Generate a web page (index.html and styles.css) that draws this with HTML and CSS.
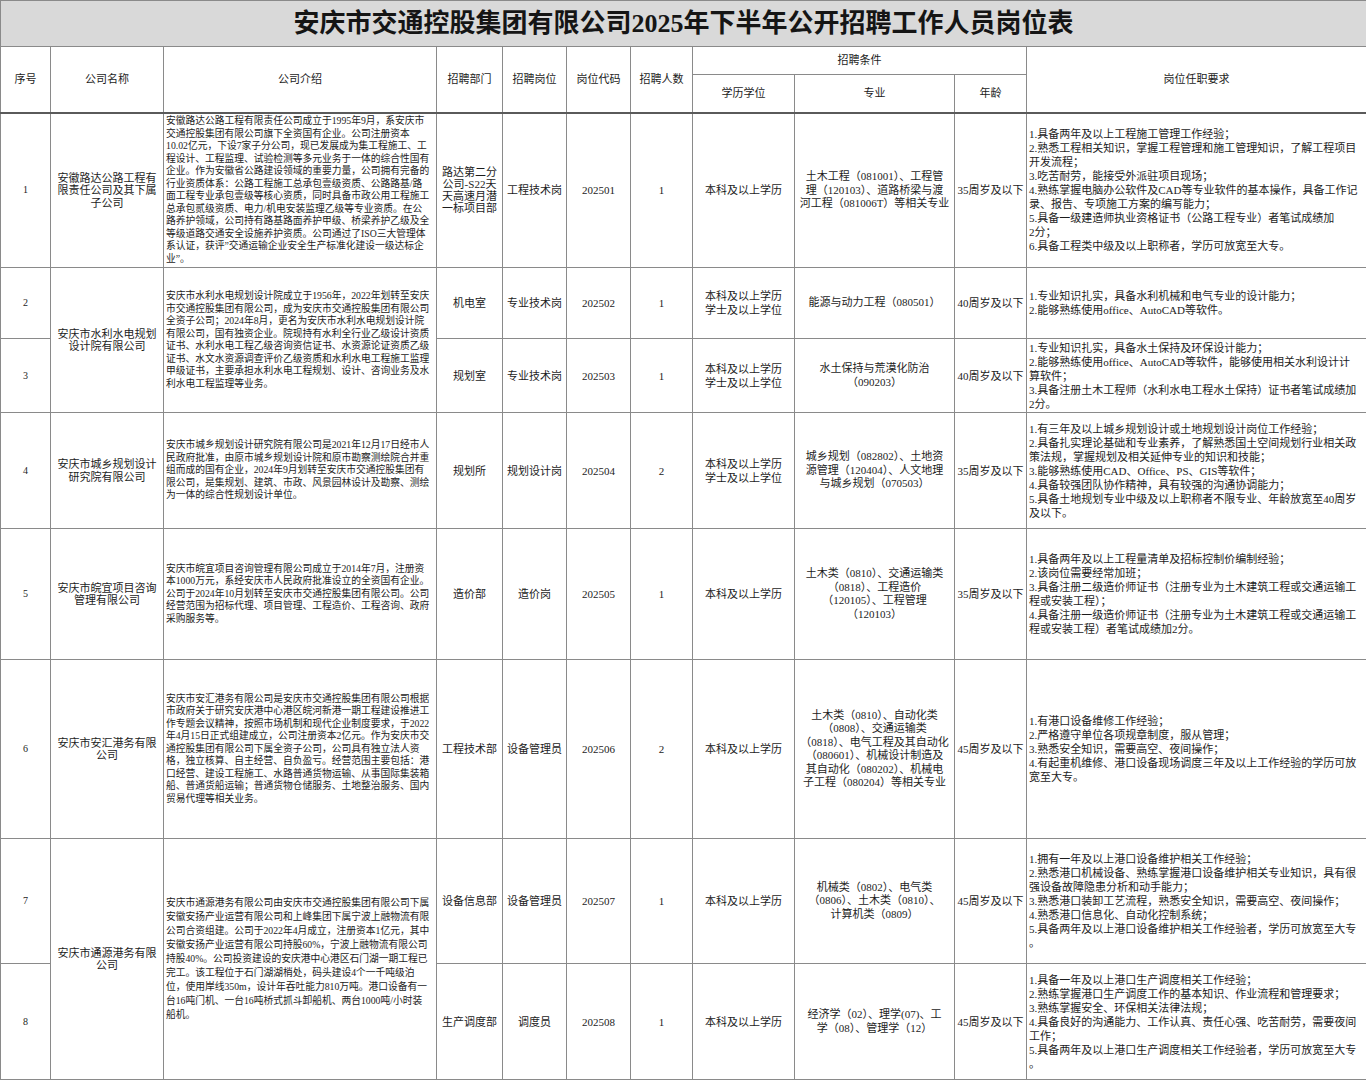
FILE: index.html
```html
<!DOCTYPE html>
<html lang="zh-CN">
<head>
<meta charset="utf-8">
<title>安庆市交通控股集团有限公司2025年下半年公开招聘工作人员岗位表</title>
<link rel="stylesheet" href="styles.css">
</head>
<body>
<table class="sheet">
  <colgroup>
    <col class="c-no"><col class="c-name"><col class="c-intro"><col class="c-dept"><col class="c-pos"><col class="c-code"><col class="c-num"><col class="c-edu"><col class="c-major"><col class="c-age"><col class="c-req">
  </colgroup>
  <thead>
    <tr class="r-title"><th colspan="11" class="title">安庆市交通控股集团有限公司2025年下半年公开招聘工作人员岗位表</th></tr>
    <tr class="r-h1">
      <th rowspan="2" class="hb">序号</th>
      <th rowspan="2" class="hb">公司名称</th>
      <th rowspan="2" class="hb">公司介绍</th>
      <th rowspan="2" class="hb">招聘部门</th>
      <th rowspan="2" class="hb">招聘岗位</th>
      <th rowspan="2" class="hb">岗位代码</th>
      <th rowspan="2" class="hb">招聘人数</th>
      <th colspan="3">招聘条件</th>
      <th rowspan="2" class="hb">岗位任职要求</th>
    </tr>
    <tr class="r-h2">
      <th class="hb">学历学位</th>
      <th class="hb">专业</th>
      <th class="hb">年龄</th>
    </tr>
  </thead>
  <tbody>
    <tr class="r1">
      <td class="no">1</td>
      <td class="name">安徽路达公路工程有<br>限责任公司及其下属<br>子公司</td>
      <td class="intro">安徽路达公路工程有限责任公司成立于1995年9月，系安庆市<br>交通控股集团有限公司旗下全资国有企业。公司注册资本<br>10.02亿元，下设7家子分公司，现已发展成为集工程施工、工<br>程设计、工程监理、试验检测等多元业务于一体的综合性国有<br>企业。作为安徽省公路建设领域的重要力量，公司拥有完备的<br>行业资质体系：公路工程施工总承包壹级资质、公路路基/路<br>面工程专业承包壹级等核心资质，同时具备市政公用工程施工<br>总承包贰级资质、电力/机电安装监理乙级等专业资质。在公<br>路养护领域，公司持有路基路面养护甲级、桥梁养护乙级及全<br>等级道路交通安全设施养护资质。公司通过了ISO三大管理体<br>系认证，获评”交通运输企业安全生产标准化建设一级达标企<br>业”。</td>
      <td class="mid tight">路达第二分<br>公司-S22天<br>天高速月潜<br>一标项目部</td>
      <td class="mid">工程技术岗</td>
      <td class="mid">202501</td>
      <td class="mid">1</td>
      <td class="mid">本科及以上学历</td>
      <td class="major">土木工程（081001）、工程管<br>理（120103）、道路桥梁与渡<br>河工程（081006T）等相关专业</td>
      <td class="mid">35周岁及以下</td>
      <td class="req">1.具备两年及以上工程施工管理工作经验；<br>2.熟悉工程相关知识，掌握工程管理和施工管理知识，了解工程项目<br>开发流程；<br>3.吃苦耐劳，能接受外派驻项目现场；<br>4.熟练掌握电脑办公软件及CAD等专业软件的基本操作，具备工作记<br>录、报告、专项施工方案的编写能力；<br>5.具备一级建造师执业资格证书（公路工程专业）者笔试成绩加<br>2分；<br>6.具备工程类中级及以上职称者，学历可放宽至大专。</td>
    </tr>
    <tr class="r2">
      <td class="no">2</td>
      <td class="name" rowspan="2">安庆市水利水电规划<br>设计院有限公司</td>
      <td class="intro" rowspan="2">安庆市水利水电规划设计院成立于1956年，2022年划转至安庆<br>市交通控股集团有限公司，成为安庆市交通控股集团有限公司<br>全资子公司；2024年8月，更名为安庆市水利水电规划设计院<br>有限公司，国有独资企业。院现持有水利全行业乙级设计资质<br>证书、水利水电工程乙级咨询资信证书、水资源论证资质乙级<br>证书、水文水资源调查评价乙级资质和水利水电工程施工监理<br>甲级证书，主要承担水利水电工程规划、设计、咨询业务及水<br>利水电工程监理等业务。</td>
      <td class="mid">机电室</td>
      <td class="mid">专业技术岗</td>
      <td class="mid">202502</td>
      <td class="mid">1</td>
      <td class="mid">本科及以上学历<br>学士及以上学位</td>
      <td class="major">能源与动力工程（080501）</td>
      <td class="mid">40周岁及以下</td>
      <td class="req">1.专业知识扎实，具备水利机械和电气专业的设计能力；<br>2.能够熟练使用office、AutoCAD等软件。</td>
    </tr>
    <tr class="r3">
      <td class="no">3</td>
      <td class="mid">规划室</td>
      <td class="mid">专业技术岗</td>
      <td class="mid">202503</td>
      <td class="mid">1</td>
      <td class="mid">本科及以上学历<br>学士及以上学位</td>
      <td class="major">水土保持与荒漠化防治<br>（090203）</td>
      <td class="mid">40周岁及以下</td>
      <td class="req">1.专业知识扎实，具备水土保持及环保设计能力；<br>2.能够熟练使用office、AutoCAD等软件，能够使用相关水利设计计<br>算软件；<br>3.具备注册土木工程师（水利水电工程水土保持）证书者笔试成绩加<br>2分。</td>
    </tr>
    <tr class="r4">
      <td class="no">4</td>
      <td class="name">安庆市城乡规划设计<br>研究院有限公司</td>
      <td class="intro">安庆市城乡规划设计研究院有限公司是2021年12月17日经市人<br>民政府批准，由原市城乡规划设计院和原市勘察测绘院合并重<br>组而成的国有企业，2024年9月划转至安庆市交通控股集团有<br>限公司，是集规划、建筑、市政、风景园林设计及勘察、测绘<br>为一体的综合性规划设计单位。</td>
      <td class="mid">规划所</td>
      <td class="mid">规划设计岗</td>
      <td class="mid">202504</td>
      <td class="mid">2</td>
      <td class="mid">本科及以上学历<br>学士及以上学位</td>
      <td class="major">城乡规划（082802）、土地资<br>源管理（120404）、人文地理<br>与城乡规划（070503）</td>
      <td class="mid">35周岁及以下</td>
      <td class="req">1.有三年及以上城乡规划设计或土地规划设计岗位工作经验；<br>2.具备扎实理论基础和专业素养，了解熟悉国土空间规划行业相关政<br>策法规，掌握规划及相关延伸专业的知识和技能；<br>3.能够熟练使用CAD、Office、PS、GIS等软件；<br>4.具备较强团队协作精神，具有较强的沟通协调能力；<br>5.具备土地规划专业中级及以上职称者不限专业、年龄放宽至40周岁<br>及以下。</td>
    </tr>
    <tr class="r5">
      <td class="no">5</td>
      <td class="name">安庆市皖宜项目咨询<br>管理有限公司</td>
      <td class="intro">安庆市皖宜项目咨询管理有限公司成立于2014年7月，注册资<br>本1000万元，系经安庆市人民政府批准设立的全资国有企业。<br>公司于2024年10月划转至安庆市交通控股集团有限公司。公司<br>经营范围为招标代理、项目管理、工程造价、工程咨询、政府<br>采购服务等。</td>
      <td class="mid">造价部</td>
      <td class="mid">造价岗</td>
      <td class="mid">202505</td>
      <td class="mid">1</td>
      <td class="mid">本科及以上学历</td>
      <td class="major">土木类（0810）、交通运输类<br>（0818）、工程造价<br>（120105）、工程管理<br>（120103）</td>
      <td class="mid">35周岁及以下</td>
      <td class="req">1.具备两年及以上工程量清单及招标控制价编制经验；<br>2.该岗位需要经常加班；<br>3.具备注册二级造价师证书（注册专业为土木建筑工程或交通运输工<br>程或安装工程）；<br>4.具备注册一级造价师证书（注册专业为土木建筑工程或交通运输工<br>程或安装工程）者笔试成绩加2分。</td>
    </tr>
    <tr class="r6">
      <td class="no">6</td>
      <td class="name">安庆市安汇港务有限<br>公司</td>
      <td class="intro">安庆市安汇港务有限公司是安庆市交通控股集团有限公司根据<br>市政府关于研究安庆港中心港区皖河新港一期工程建设推进工<br>作专题会议精神，按照市场机制和现代企业制度要求，于2022<br>年4月15日正式组建成立，公司注册资本2亿元。作为安庆市交<br>通控股集团有限公司下属全资子公司，公司具有独立法人资<br>格，独立核算、自主经营、自负盈亏。经营范围主要包括：港<br>口经营、建设工程施工、水路普通货物运输、从事国际集装箱<br>船、普通货船运输；普通货物仓储服务、土地整治服务、国内<br>贸易代理等相关业务。</td>
      <td class="mid">工程技术部</td>
      <td class="mid">设备管理员</td>
      <td class="mid">202506</td>
      <td class="mid">2</td>
      <td class="mid">本科及以上学历</td>
      <td class="major">土木类（0810）、自动化类<br>（0808）、交通运输类<br>（0818）、电气工程及其自动化<br>（080601）、机械设计制造及<br>其自动化（080202）、机械电<br>子工程（080204）等相关专业</td>
      <td class="mid">45周岁及以下</td>
      <td class="req">1.有港口设备维修工作经验；<br>2.严格遵守单位各项规章制度，服从管理；<br>3.熟悉安全知识，需要高空、夜间操作；<br>4.有起重机维修、港口设备现场调度三年及以上工作经验的学历可放<br>宽至大专。</td>
    </tr>
    <tr class="r7">
      <td class="no">7</td>
      <td class="name" rowspan="2">安庆市通源港务有限<br>公司</td>
      <td class="intro wide" rowspan="2">安庆市通源港务有限公司由安庆市交通控股集团有限公司下属<br>安徽安扬产业运营有限公司和上峰集团下属宁波上融物流有限<br>公司合资组建。公司于2022年4月成立，注册资本1亿元，其中<br>安徽安扬产业运营有限公司持股60%，宁波上融物流有限公司<br>持股40%。公司投资建设的安庆港中心港区石门湖一期工程已<br>完工。该工程位于石门湖湖梢处，码头建设4个一千吨级泊<br>位，使用岸线350m，设计年吞吐能力810万吨。港口设备有一<br>台16吨门机、一台16吨桥式抓斗卸船机、两台1000吨/小时装<br>船机。</td>
      <td class="mid">设备信息部</td>
      <td class="mid">设备管理员</td>
      <td class="mid">202507</td>
      <td class="mid">1</td>
      <td class="mid">本科及以上学历</td>
      <td class="major">机械类（0802）、电气类<br>（0806）、土木类（0810）、<br>计算机类（0809）</td>
      <td class="mid">45周岁及以下</td>
      <td class="req">1.拥有一年及以上港口设备维护相关工作经验；<br>2.熟悉港口机械设备、熟练掌握港口设备维护相关专业知识，具有很<br>强设备故障隐患分析和动手能力；<br>3.熟悉港口装卸工艺流程，熟悉安全知识，需要高空、夜间操作；<br>4.熟悉港口信息化、自动化控制系统；<br>5.具备两年及以上港口设备维护相关工作经验者，学历可放宽至大专<br>。</td>
    </tr>
    <tr class="r8">
      <td class="no">8</td>
      <td class="mid">生产调度部</td>
      <td class="mid">调度员</td>
      <td class="mid">202508</td>
      <td class="mid">1</td>
      <td class="mid">本科及以上学历</td>
      <td class="major">经济学（02）、理学(07)、工<br>学（08）、管理学（12）</td>
      <td class="mid">45周岁及以下</td>
      <td class="req">1.具备一年及以上港口生产调度相关工作经验；<br>2.熟练掌握港口生产调度工作的基本知识、作业流程和管理要求；<br>3.熟练掌握安全、环保相关法律法规；<br>4.具备良好的沟通能力、工作认真、责任心强、吃苦耐劳，需要夜间<br>工作；<br>5.具备两年及以上港口生产调度相关工作经验者，学历可放宽至大专<br>。</td>
    </tr>
  </tbody>
</table>
</body>
</html>
```

FILE: styles.css
```css
html, body {
  margin: 0;
  padding: 0;
  background: #ffffff;
}

body {
  font-family: "Liberation Serif", "Noto Sans CJK SC", serif;
  color: #1c1c1c;
}

.sheet {
  width: 1366px;
  table-layout: fixed;
  border-collapse: collapse;
}

.c-no { width: 50px; }
.c-name { width: 113px; }
.c-intro { width: 273px; }
.c-dept { width: 66px; }
.c-pos { width: 64px; }
.c-code { width: 64px; }
.c-num { width: 62px; }
.c-edu { width: 102px; }
.c-major { width: 160px; }
.c-age { width: 72px; }
.c-req { width: 340px; }

.sheet th,
.sheet td {
  border: 1px solid #8a8a8a;
  padding: 0 2px;
  vertical-align: middle;
  white-space: nowrap;
  overflow: visible;
}

.r-title { height: 46px; }
.r-h1 { height: 28px; }
.r-h2 { height: 38px; }
.r1 { height: 155px; }
.r2 { height: 71px; }
.r3 { height: 74px; }
.r4 { height: 116px; }
.r5 { height: 131px; }
.r6 { height: 179px; }
.r7 { height: 125px; }
.r8 { height: 116px; }

.title {
  background: #d9d9d9;
  font-size: 26px;
  font-weight: bold;
  letter-spacing: 0;
  color: #151515;
  text-align: center;
  border-bottom: 2px solid #5a5a5a;
  line-height: 30px;
}

.sheet thead th {
  font-size: 11px;
  font-weight: normal;
  line-height: 13px;
  text-align: center;
}

.sheet thead .title {
  font-size: 26px;
  font-weight: bold;
  line-height: 30px;
}

.sheet thead th.hb {
  border-bottom: 2px solid #5a5a5a;
}

.no {
  font-size: 10px;
  text-align: center;
  line-height: 12px;
}

.name {
  font-size: 11px;
  line-height: 12.5px;
  text-align: center;
}

.intro {
  font-size: 9.75px;
  line-height: 12.5px;
  text-align: left;
  padding-left: 3px;
}

.intro.wide {
  line-height: 14px;
}

.mid {
  font-size: 11px;
  line-height: 14px;
  text-align: center;
}

.mid.tight {
  line-height: 12px;
}

.major {
  font-size: 11px;
  line-height: 13.5px;
  text-align: center;
}

.req {
  font-size: 11px;
  line-height: 14px;
  text-align: left;
}
```
